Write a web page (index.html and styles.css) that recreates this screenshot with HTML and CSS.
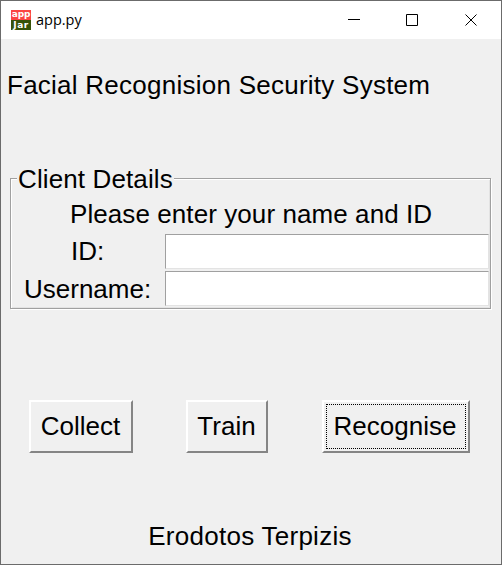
FILE: index.html
```html
<!DOCTYPE html>
<html lang="en">
<head>
<meta charset="utf-8">
<title>app.py</title>
<link rel="stylesheet" href="styles.css">
</head>
<body>
<div class="window">
  <header class="titlebar">
    <div class="logo"><span class="logo-top">app</span><span class="logo-bottom">Jar</span></div>
    <span class="caption">app.py</span>
    <svg class="controls" width="138" height="38" viewBox="0 0 138 38" fill="none" stroke="#000" stroke-width="1">
      <path d="M-15 18.5H-3M43.5 13.5h11v11h-11z"/>
      <path d="M102.5 13.5l11 11M113.5 13.5l-11 11"/>
    </svg>
  </header>
  <main class="content">
    <h1 class="heading"><span>Facial Recognision Security System</span></h1>
    <section class="group">
      <h2 class="legend"><span>Client Details</span></h2>
      <p class="prompt">Please enter your name and ID</p>
      <div class="row row-id"><label for="id">ID:</label><input id="id" type="text"></div>
      <div class="row row-user"><label for="user">Username:</label><input id="user" type="text"></div>
    </section>
    <div class="buttons">
      <button class="collect"><span>Collect</span></button>
      <button class="train"><span>Train</span></button>
      <button class="recognise"><span>Recognise</span></button>
    </div>
    <footer class="footer"><span>Erodotos Terpizis</span></footer>
  </main>
</div>
</body>
</html>
```
FILE: styles.css
```css
* { box-sizing: border-box; }
body { margin: 0; overflow: hidden; }
.window {
  width: 502px;
  height: 565px;
  border: 1px solid #6b6b6b;
  background: #f0f0f0;
  color: #000;
  font: 26px/30px "Liberation Sans", Arial, sans-serif;
}
.titlebar {
  display: flex;
  align-items: center;
  height: 38px;
  padding-left: 10px;
  background: #fff;
}
.logo {
  display: flex;
  flex-direction: column;
  width: 20px;
  height: 20px;
  color: #fff;
  font: bold 9px/10px "DejaVu Sans", sans-serif;
  text-align: center;
}
.logo span { height: 10px; }
.logo .logo-top { background: #fb4343; line-height: 8px; letter-spacing: -0.1px; }
.logo .logo-bottom { background: #365208; line-height: 10px; letter-spacing: 0.5px; }
.caption { margin-left: 5px; font: 14.5px/20px "Open Sans", sans-serif; }
.controls { margin-left: auto; overflow: visible; }
.content { display: flex; flex-direction: column; padding-top: 31px; }
h1, h2, p { margin: 0; font-size: inherit; font-weight: normal; }
.heading { padding-left: 6px; white-space: nowrap; letter-spacing: 0.25px; }
.group {
  width: 481px;
  height: 131px;
  margin: 78px 0 0 9px;
  border: 1px solid #a0a0a0;
  box-shadow: inset 1px 1px #fff, inset -1px -1px #e3e3e3, 1px 1px #fff;
}
.legend { height: 20px; margin-top: -15px; padding-left: 6px; letter-spacing: 0.12px; }
.legend span { display: inline-block; padding: 0 1px; background: #f0f0f0; }
.prompt { height: 30px; margin-top: 15px; padding-left: 59px; white-space: nowrap; letter-spacing: 0.08px; }
.row { display: flex; width: 478px; height: 35px; margin-top: 5px; }
.row-user { margin-top: 2px; }
.row label { width: 154px; padding-left: 60px; line-height: 35px; }
.row-user label { padding-left: 13px; line-height: 37px; }
.row input {
  width: 324px;
  height: 35px;
  padding: 0 4px;
  border: 1px solid #e3e3e3;
  border-top-color: #a0a0a0;
  border-left-color: #a0a0a0;
  background: #fff;
  font: inherit;
}
.buttons { display: flex; margin: 91px 0 0 28px; }
button {
  height: 53px;
  padding: 0 1px 2px 0;
  border: 2px solid;
  border-color: #fff #858585 #858585 #fff;
  background: #f0f0f0;
  color: #000;
  font: inherit;
}
.collect { width: 104px; }
.train { width: 82px; margin-left: 53px; }
.recognise { width: 148px; margin-left: 54px; padding: 2px; }
.recognise span { display: block; height: 45px; padding-right: 2px; border: 1px dotted #000; line-height: 43px; }
.footer { margin-top: 68px; padding-right: 2px; text-align: center; letter-spacing: 0.27px; }
```
